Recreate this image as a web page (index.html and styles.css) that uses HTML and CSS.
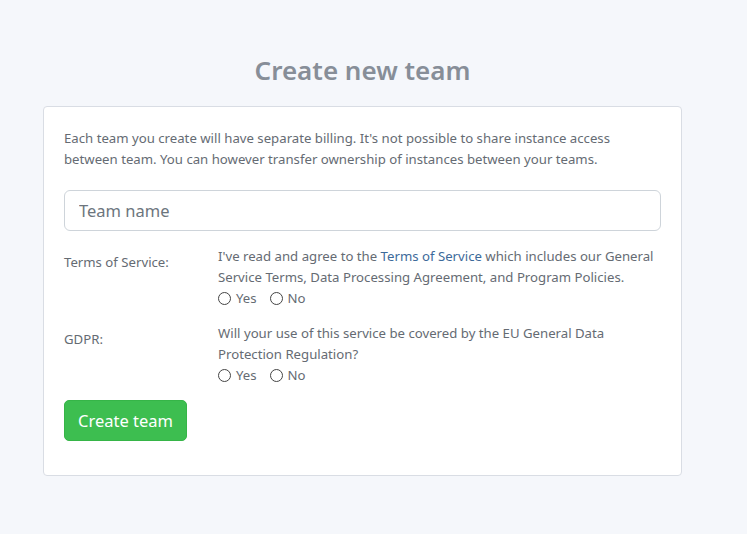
FILE: index.html
```html
<!DOCTYPE html>
<html>
<head>
<meta charset="utf-8">
<link rel="stylesheet" href="styles.css">
</head>
<body>
<div class="page">
  <h1 class="title">Create new team</h1>
  <div class="card">
    <p class="desc">Each team you create will have separate billing. It's not possible to share instance access between team. You can however transfer ownership of instances between your teams.</p>
    <input class="input" type="text" placeholder="Team name">
    <div class="row">
      <div class="label">Terms of Service:</div>
      <div class="content">
        <div class="text">I've read and agree to the <a class="link" href="#">Terms of Service</a> which includes our General Service Terms, Data Processing Agreement, and Program Policies.</div>
        <div class="radios">
          <label class="radio"><span class="circle"></span>Yes</label>
          <label class="radio"><span class="circle"></span>No</label>
        </div>
      </div>
    </div>
    <div class="row">
      <div class="label">GDPR:</div>
      <div class="content">
        <div class="text">Will your use of this service be covered by the EU General Data Protection Regulation?</div>
        <div class="radios">
          <label class="radio"><span class="circle"></span>Yes</label>
          <label class="radio"><span class="circle"></span>No</label>
        </div>
      </div>
    </div>
    <button class="btn">Create team</button>
  </div>
</div>
</body>
</html>
```
FILE: styles.css
```css
html, body {
  margin: 0;
  padding: 0;
  background: #f5f7fb;
  font-family: "Noto Sans", "Open Sans", sans-serif;
  color: #5f6368;
}
.page {
  width: 639px;
  margin-left: 43px;
  padding-top: 52px;
}
.title {
  margin: 0 0 18px 0;
  text-align: center;
  font-size: 26px;
  font-weight: 600;
  color: #878e98;
  line-height: 36px;
}
.card {
  background: #fff;
  border: 1px solid #d9dde4;
  border-radius: 4px;
  padding: 21px 20px 34px 20px;
}
.desc {
  margin: 0 0 20px 0;
  font-size: 13.2px;
  line-height: 21px;
  color: #656b73;
}
.input {
  display: block;
  box-sizing: border-box;
  width: 597px;
  height: 41px;
  border: 1px solid #ced4da;
  border-radius: 6px;
  padding: 0 14px;
  font-family: inherit;
  font-size: 16.5px;
  color: #495057;
  margin-bottom: 15px;
}
.input::placeholder { color: #6c757d; }
.row {
  display: flex;
  margin-bottom: 14px;
}
.label {
  width: 154px;
  flex-shrink: 0;
  font-size: 13.2px;
  line-height: 21px;
  padding-top: 6px;
  color: #656b73;
}
.content {
  flex: 1;
  font-size: 13.2px;
  line-height: 21px;
  color: #656b73;
}
.link { color: #3d6a9a; text-decoration: none; }
.radios { display: flex; gap: 13px; }
.radio { display: flex; align-items: center; gap: 5px; }
.circle {
  width: 13px; height: 13px;
  border: 1px solid #444;
  border-radius: 50%;
  box-sizing: border-box;
}
.btn {
  display: block;
  background: #3dbe50;
  color: #fff;
  border: 1px solid #36b548;
  border-radius: 5px;
  font-family: inherit;
  font-size: 16.5px;
  height: 41px;
  padding: 0 13px;
  margin-top: 1px;
}
```
